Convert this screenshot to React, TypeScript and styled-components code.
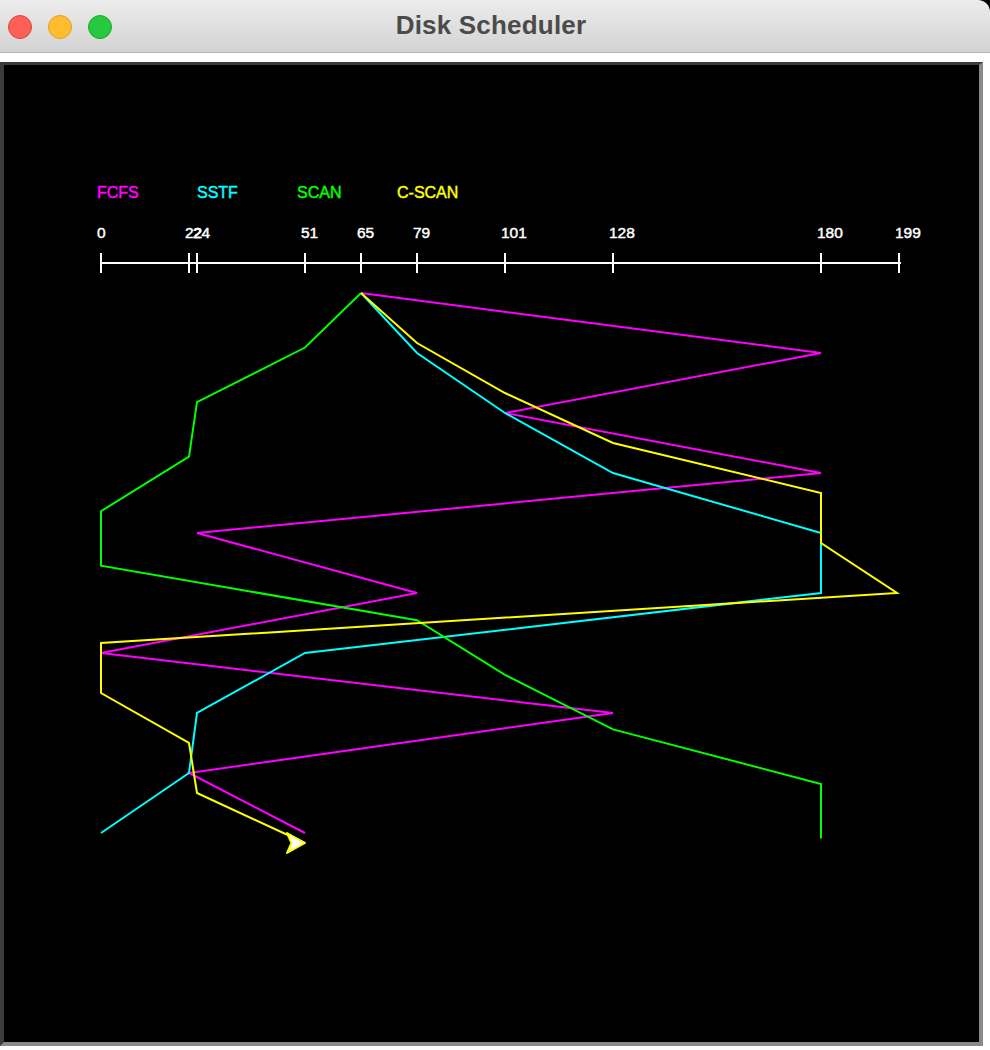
import React from "react";
import styled, { createGlobalStyle } from "styled-components";

const GlobalStyle = createGlobalStyle`
  html, body {
    margin: 0;
    padding: 0;
    background: #ffffff;
  }
  #root {
    width: 990px;
    height: 1050px;
  }
`;

const Window = styled.div`
  width: 990px;
  height: 1050px;
  display: flex;
  flex-direction: column;
  background: #ffffff;
  overflow: hidden;
`;

const TitleShell = styled.div`
  background: #000000;
`;

const TitleBar = styled.div`
  height: 52px;
  border-bottom: 1px solid #b3b3b3;
  border-top-right-radius: 12px;
  background: linear-gradient(#ececec, #d3d3d3);
  display: grid;
  grid-template-columns: 1fr auto 1fr;
  align-items: center;
  padding: 0 16px 0 8px;
`;

const Lights = styled.div`
  display: flex;
  gap: 16px;
  align-items: center;
`;

const Light = styled.span<{ $fill: string; $edge: string }>`
  width: 24px;
  height: 24px;
  border-radius: 50%;
  box-sizing: border-box;
  background: ${(p) => p.$fill};
  border: 1px solid ${(p) => p.$edge};
  margin-top: 1px;
`;

const Title = styled.div`
  font-family: "Liberation Sans", Arial, sans-serif;
  font-weight: bold;
  font-size: 26px;
  color: #4b4b4b;
  letter-spacing: 0.2px;
  margin-top: -1px;
`;

const Body = styled.div`
  flex: 1;
  padding-top: 9px;
`;

const Frame = styled.div`
  width: 975px;
  height: 977px;
  border-style: solid;
  border-width: 3px 4px 4px 4px;
  border-color: #3c3c3c #8a8a8a #8a8a8a #3c3c3c;
  background: #000000;
`;

const Chart = styled.svg`
  display: block;
  width: 975px;
  height: 977px;
`;

const ChartText = styled.text<{ $color: string }>`
  font-family: "Liberation Sans", Arial, sans-serif;
  font-size: 16px;
  fill: ${(p) => p.$color};
  stroke: ${(p) => p.$color};
  stroke-width: 0.45px;
`;

const AxisLabel = styled.text`
  font-family: "Liberation Sans", Arial, sans-serif;
  font-size: 15.5px;
  fill: #ffffff;
  stroke: #ffffff;
  stroke-width: 0.45px;
`;

const Trace = styled.polyline<{ $color: string }>`
  fill: none;
  stroke: ${(p) => p.$color};
  stroke-width: 2;
  stroke-linejoin: miter;
`;

const AxisStroke = styled.line`
  stroke: #ffffff;
  stroke-width: 2;
`;

const Cursor = styled.polygon`
  fill: #ffffff;
  stroke: #ffff00;
  stroke-width: 2;
  stroke-linejoin: round;
`;

const series = [
  { name: "FCFS", color: "#ff00ff", seq: [65, 180, 101, 180, 24, 79, 0, 128, 22, 51] },
  { name: "SSTF", color: "#00ffff", seq: [65, 79, 101, 128, 180, 180, 51, 24, 22, 0] },
  { name: "SCAN", color: "#00ff00", seq: [65, 51, 24, 22, 0, 0, 79, 101, 128, 180, 180] },
  { name: "C-SCAN", color: "#ffff00", seq: [65, 79, 101, 128, 180, 180, 199, 0, 0, 22, 24, 51] },
];

const ticks = [0, 22, 24, 51, 65, 79, 101, 128, 180, 199];

const xOf = (v: number) => 101 + v * 4;
const tickX = (v: number) => (v === 199 ? 899 : xOf(v));

const TOP = 293;
const AXIS_Y = 263;

export default function App() {
  return (
    <>
      <GlobalStyle />
      <Window>
        <TitleShell>
          <TitleBar>
            <Lights>
              <Light $fill="#fe5f57" $edge="#e0443e" />
              <Light $fill="#febc2e" $edge="#dea123" />
              <Light $fill="#28c840" $edge="#1aab29" />
            </Lights>
            <Title>Disk Scheduler</Title>
            <span />
          </TitleBar>
        </TitleShell>
        <Body>
          <Frame>
            <Chart viewBox="4 65 975 977">
              {series.map((s, i) => (
                <ChartText key={s.name} $color={s.color} x={97 + i * 100} y={198}>
                  {s.name}
                </ChartText>
              ))}
              {ticks.map((t) => (
                <AxisLabel key={`l${t}`} x={tickX(t) - 4} y={238}>
                  {t}
                </AxisLabel>
              ))}
              <AxisStroke x1={101} y1={AXIS_Y} x2={901} y2={AXIS_Y} />
              {ticks.map((t) => (
                <AxisStroke key={`t${t}`} x1={tickX(t)} y1={AXIS_Y - 10} x2={tickX(t)} y2={AXIS_Y + 10} />
              ))}
              {series.map((s) => {
                const step = 600 / s.seq.length;
                const pts = s.seq.map((v, i) => `${xOf(v)},${TOP + i * step}`).join(" ");
                return <Trace key={s.name} $color={s.color} points={pts} />;
              })}
              <Cursor points="305,843 287,833 291.5,843 287,853" />
            </Chart>
          </Frame>
        </Body>
      </Window>
    </>
  );
}
